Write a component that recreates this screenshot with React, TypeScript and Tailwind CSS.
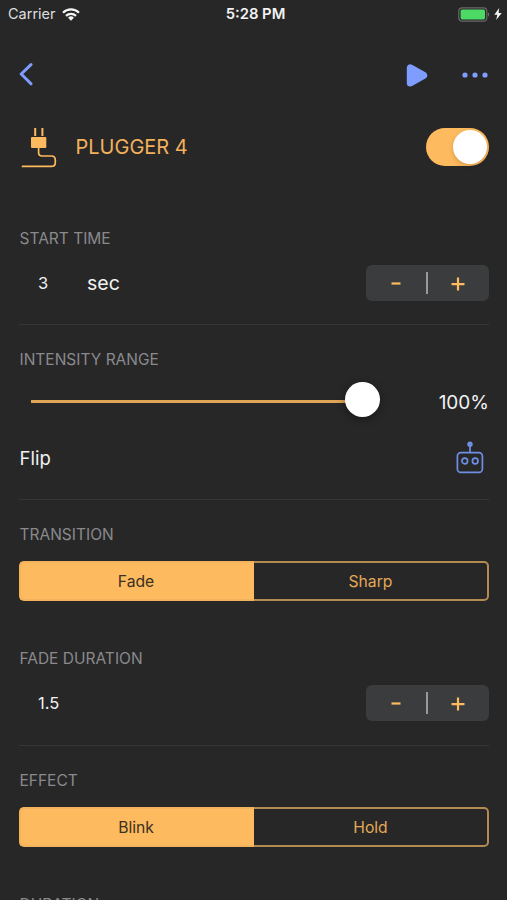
import { useState } from 'react';
import type { ReactNode } from 'react';

interface StepperProps {
  onDecrease: () => void;
  onIncrease: () => void;
}

interface SegmentedProps {
  options: [string, string];
  value: string;
  onChange: (value: string) => void;
}

const SectionLabel = ({ children }: { children: ReactNode }) => (
  <h2 className="h-5 pl-[0.5px] text-[15.5px] leading-[22px] text-[#8a8a8c] whitespace-nowrap">{children}</h2>
);

const Stepper = ({ onDecrease, onIncrease }: StepperProps) => (
  <div className="flex h-9 w-[123px] items-center rounded-md bg-[#3a3c3d] pr-px text-[#fdba5e]">
    <button onClick={onDecrease} className="flex h-full flex-1 items-center justify-center" aria-label="Decrease">
      <svg width="14" height="14" viewBox="0 0 14 14">
        <path d="M2.5 7.5h9" stroke="currentColor" strokeWidth="2.2" />
      </svg>
    </button>
    <span className="h-[22px] w-[1.5px] bg-[#98999b]" />
    <button onClick={onIncrease} className="flex h-full flex-1 items-center justify-center" aria-label="Increase">
      <svg width="14" height="15" viewBox="0 0 14 15">
        <path d="M.5 8.2h13M7 1.6v13" stroke="currentColor" strokeWidth="2.2" />
      </svg>
    </button>
  </div>
);

const Segmented = ({ options, value, onChange }: SegmentedProps) => (
  <div className="flex h-10 text-[15.7px]">
    {options.map((option) => (
      <button
        key={option}
        onClick={() => onChange(option)}
        className={`w-1/2 border-2 pt-px first:rounded-l-[5px] first:border-r-0 first:pr-[3px] last:rounded-r-[5px] last:border-l-0 ${
          option === value
            ? 'border-[#f3b35c] bg-[#fdba5e] text-[#3b3023]'
            : 'border-[#b38b52] text-[#e3a957]'
        }`}
      >
        {option}
      </button>
    ))}
  </div>
);

const Divider = () => <div className="h-px w-full bg-[#363638]" />;

export default function App() {
  const [enabled, setEnabled] = useState(true);
  const [start, setStart] = useState(3);
  const [fade, setFade] = useState(1.5);
  const [transition, setTransition] = useState('Fade');
  const [effect, setEffect] = useState('Blink');

  return (
    <div className="h-[900px] w-[507px] overflow-hidden bg-[#272728] font-['Inter',sans-serif] text-[#f2f2f2]">
      {/* Status bar */}
      <div className="grid h-7 grid-cols-3 items-center pl-2 pr-[5px]">
        <div className="flex items-center gap-[6px]">
          <span className="text-[14.5px] text-[#dededf]">Carrier</span>
          <svg width="18" height="13" viewBox="0 0 18 13" fill="none" stroke="#f4f4f4" strokeWidth="2.2">
            <path d="M1 4.7a11.3 11.3 0 0 1 16 0" />
            <path d="M4 7.9a7.1 7.1 0 0 1 10 0" />
            <path d="M9 12.7 6.1 9.8a4.1 4.1 0 0 1 5.8 0z" fill="#f4f4f4" stroke="none" />
          </svg>
        </div>
        <span className="pl-px text-center text-[14.8px] font-semibold">5:28 PM</span>
        <div className="flex items-center justify-end gap-1">
          <svg width="32" height="15" viewBox="0 0 32 15">
            <rect x=".8" y=".8" width="28" height="13.4" rx="3.5" fill="none" stroke="#69696a" strokeWidth="1.2" />
            <rect x="2.6" y="2.6" width="24.4" height="9.8" rx="1.6" fill="#4cd964" />
            <path d="M30 5.3c1.8.8 1.8 3.6 0 4.4z" fill="#69696a" />
          </svg>
          <svg width="8" height="12" viewBox="0 0 8 12">
            <path d="M5.2 0 .3 6.8h3L2.2 12l5.5-7H4.6z" fill="#f4f4f4" />
          </svg>
        </div>
      </div>

      {/* Navigation */}
      <div className="flex h-[94px] items-center px-[18px] text-[#7f9dff]">
        <button aria-label="Back">
          <svg width="16" height="24" viewBox="0 0 16 24" fill="none">
            <path d="M13 1.6 3.2 11l9.8 9.8" stroke="currentColor" strokeWidth="3" strokeLinecap="round" strokeLinejoin="round" />
          </svg>
        </button>
        <div className="ml-auto flex items-center gap-[33px]">
          <button aria-label="Play">
            <svg width="22" height="24" viewBox="0 0 22 24">
              <path d="M4.3 4.8v15.2l13.4-7.6z" fill="currentColor" stroke="currentColor" strokeWidth="7" strokeLinejoin="round" />
            </svg>
          </button>
          <button aria-label="More">
            <svg width="28" height="6" viewBox="0 0 28 6" fill="currentColor">
              <circle cx="4" cy="3" r="2.6" />
              <circle cx="14" cy="3" r="2.6" />
              <circle cx="24" cy="3" r="2.6" />
            </svg>
          </button>
        </div>
      </div>

      <main className="pl-[19px] pr-[18px]">
        <div className="flex h-[50px] items-center">
          <svg width="38" height="42" viewBox="0 0 38 42" fill="none" stroke="#fdba5e">
            <path d="M16.2 2v8M23.4 2v8" strokeWidth="2" />
            <rect x="12" y="11" width="15.3" height="11" rx="1" fill="#fdba5e" stroke="none" />
            <path d="M19.6 22v4.5q0 3.5 3.5 3.5h9.2q4 0 4 4v2.4q0 4-4 4H3.5" strokeWidth="1.7" strokeLinecap="round" />
          </svg>
          <h1 className="ml-[18.5px] text-[20px] text-[#f2b15a]">PLUGGER 4</h1>
          <button
            role="switch"
            aria-checked={enabled}
            onClick={() => setEnabled(!enabled)}
            className={`ml-auto flex h-[38px] w-[63px] items-center rounded-full p-[2px] ${enabled ? 'justify-end bg-[#fdba5e]' : 'justify-start bg-[#3a3c3d]'}`}
          >
            <span className="size-[34px] rounded-full bg-white shadow-[0_2px_5px_rgba(0,0,0,0.15)]" />
          </button>
        </div>

        <section className="pt-14 pb-[23px]">
          <SectionLabel>START TIME</SectionLabel>
          <div className="mt-[17px] flex items-center">
            <span className="ml-[19px] w-[49px] text-[16.5px]">{start}</span>
            <span className="pt-px text-[19.5px]">sec</span>
            <div className="ml-auto">
              <Stepper onDecrease={() => setStart(start - 1)} onIncrease={() => setStart(start + 1)} />
            </div>
          </div>
        </section>
        <Divider />

        <section className="pt-6 pb-[25px]">
          <SectionLabel>INTENSITY RANGE</SectionLabel>
          <div className="mt-[13px] flex h-[35px] items-center justify-between">
            <div className="flex w-[361px] items-center pl-3">
              <span className="mt-[3px] h-[3px] flex-1 bg-[#dfa556]" />
              <span className="-ml-px size-[35px] rounded-full bg-white shadow-[0_2px_8px_rgba(0,0,0,0.4)]" />
            </div>
            <span className="pt-2 text-[19px]">100%</span>
          </div>
          <div className="mt-6 flex h-[33px] items-center justify-between">
            <span className="pt-[3px] pl-[0.5px] text-[18.5px]">Flip</span>
            <svg className="mr-[5px]" width="28" height="33" viewBox="0 0 28 33" fill="none" stroke="#6f8fe6" strokeWidth="1.7">
              <circle cx="14" cy="3.2" r="2.7" fill="#6f8fe6" stroke="none" />
              <path d="M14 4v8" />
              <rect x="1.4" y="11.6" width="25" height="19.8" rx="3.5" />
              <circle cx="8.8" cy="20" r="2.8" />
              <circle cx="19.2" cy="20" r="2.8" />
            </svg>
          </div>
        </section>
        <Divider />

        <section className="pt-6">
          <SectionLabel>TRANSITION</SectionLabel>
          <div className="mt-[17px]">
            <Segmented options={['Fade', 'Sharp']} value={transition} onChange={setTransition} />
          </div>
        </section>

        <section className="pt-[47px] pb-6">
          <SectionLabel>FADE DURATION</SectionLabel>
          <div className="mt-[17px] flex items-center justify-between">
            <span className="ml-[19px] text-[16.5px]">{fade}</span>
            <Stepper onDecrease={() => setFade(fade - 0.5)} onIncrease={() => setFade(fade + 0.5)} />
          </div>
        </section>
        <Divider />

        <section className="pt-6">
          <SectionLabel>EFFECT</SectionLabel>
          <div className="mt-[17px]">
            <Segmented options={['Blink', 'Hold']} value={effect} onChange={setEffect} />
          </div>
        </section>

        <section className="pt-[47px]">
          <SectionLabel>DURATION</SectionLabel>
        </section>
      </main>
    </div>
  );
}
